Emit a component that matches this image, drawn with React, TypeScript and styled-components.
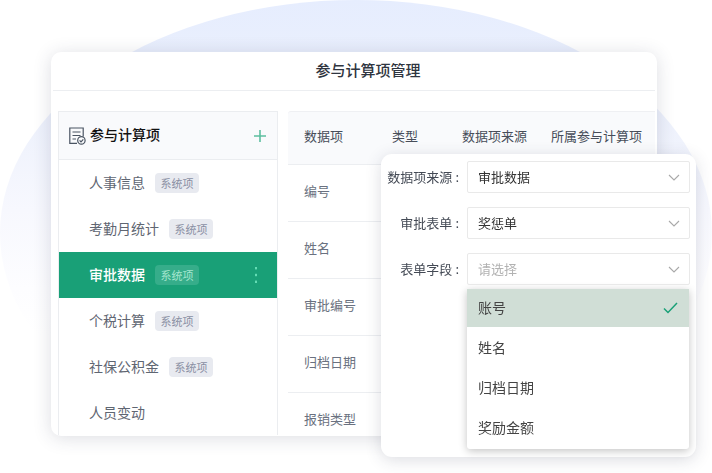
import React from "react";
import styled, { createGlobalStyle } from "styled-components";

const Global = createGlobalStyle`
  html, body { margin: 0; padding: 0; background: #fff; }
  body { font-family: "Noto Sans CJK SC", "Noto Sans", sans-serif; }
  * { box-sizing: border-box; }
`;

const Stage = styled.div`
  position: relative;
  width: 712px;
  height: 473px;
  overflow: hidden;
  padding: 52px 55px 37px 51px;
  background: #fff;
`;

const Backdrop = styled.div`
  position: absolute;
  left: 0;
  top: 0;
  width: 712px;
  height: 466px;
  border-radius: 50%;
  background: linear-gradient(180deg, #e6edfe 0%, #edf1fc 25%, #f7f8fe 45%, #fdfdff 62%, #ffffff 72%);
`;

const Panel = styled.section`
  position: relative;
  height: 384px;
  border-radius: 10px;
  background: #fff;
  overflow: hidden;
  box-shadow: 0 2px 18px rgba(45, 55, 85, 0.17);
`;

const PanelTitle = styled.header`
  height: 39px;
  margin: 0 2px;
  padding: 0 0 3px 28px;
  display: flex;
  align-items: center;
  justify-content: center;
  border-bottom: 1px solid #eceef1;
  font-size: 15px;
  font-weight: 500;
  color: #2f3540;
`;

const PanelBody = styled.div`
  display: flex;
  gap: 10px;
  padding: 20px 2px 0 7px;
`;

const List = styled.div`
  width: 220px;
  flex: none;
  height: 324px;
  border: 1px solid #ebedf0;
  border-bottom: 0;
`;

const ListHead = styled.div`
  height: 48px;
  display: flex;
  align-items: center;
  gap: 4px;
  padding: 0 10px;
  background: #f9fafc;
  border-bottom: 1px solid #ebedf0;
  font-size: 14px;
  font-weight: 500;
  color: #111;
`;

const ListHeadText = styled.span`
  flex: 1;
  padding-bottom: 3px;
`;

const ListRow = styled.div<{ $active?: boolean }>`
  height: 46px;
  display: flex;
  align-items: center;
  padding: 0 19px 0 30px;
  font-size: 14px;
  font-weight: ${(p) => (p.$active ? 500 : 400)};
  color: ${(p) => (p.$active ? "#fff" : "#5f6672")};
  background: ${(p) => (p.$active ? "#19a077" : "transparent")};
`;

const RowName = styled.span`
  padding-bottom: 2px;
`;

const Tag = styled.span<{ $active?: boolean }>`
  margin-left: 10px;
  width: 44px;
  height: 20px;
  display: flex;
  align-items: center;
  justify-content: center;
  border-radius: 4px;
  font-size: 11px;
  font-weight: 400;
  color: ${(p) => (p.$active ? "#a5e6cf" : "#8a8fa3")};
  background: ${(p) => (p.$active ? "#36ad8a" : "#e8eaf0")};
`;

const MoreIcon = styled.svg`
  margin-left: auto;
  flex: none;
`;

const Table = styled.div`
  flex: 1;
  font-size: 13px;
`;

const TableHead = styled.div`
  display: grid;
  grid-template-columns: 88px 70px 89px 1fr;
  height: 54px;
  align-items: center;
  background: #f9fafc;
  border-top: 1px solid #eff0f3;
  border-bottom: 1px solid #eceef1;
  border-top-left-radius: 3px;
  padding: 0 0 5px 16px;
  color: #474d59;
  white-space: nowrap;
`;

const TableRow = styled.div`
  height: 57px;
  padding: 0 0 5px 16px;
  display: flex;
  align-items: center;
  border-bottom: 1px solid #eceef1;
  color: #6a7180;
`;

const Floating = styled.div`
  position: absolute;
  left: 381px;
  top: 154px;
  width: 315px;
  height: 303px;
  padding: 7px 6px 0 0;
  border-radius: 11px;
  background: #fff;
  box-shadow: 0 3px 16px rgba(45, 55, 85, 0.17);
  will-change: transform;
`;

const Field = styled.div<{ $tight?: boolean }>`
  display: flex;
  align-items: center;
  gap: 8px;
  margin-bottom: ${(p) => (p.$tight ? "4px" : "14px")};
`;

const Label = styled.label`
  width: 78px;
  flex: none;
  padding-bottom: 1px;
  text-align: right;
  font-size: 13px;
  color: #444a55;
  white-space: nowrap;
`;

const Colon = styled.span`
  margin-left: 3px;
`;

const Select = styled.div<{ $placeholder?: boolean }>`
  flex: 1;
  height: 32px;
  display: flex;
  align-items: center;
  justify-content: space-between;
  padding: 0 9px 0 10px;
  border: 1px solid #e9e9e9;
  border-radius: 2px;
  font-size: 13px;
  color: ${(p) => (p.$placeholder ? "#b2b2b2" : "#333")};
`;

const SelectText = styled.span`
  padding-bottom: 1px;
`;

const Dropdown = styled.div`
  margin-left: 86px;
  width: 222px;
  height: 160px;
  padding-bottom: 1px;
  border-radius: 0 0 3px 3px;
  background: #fff;
  box-shadow: 0 2px 8px rgba(0, 0, 0, 0.24);
`;

const Option = styled.div<{ $selected?: boolean }>`
  height: ${(p) => (p.$selected ? "38px" : "40px")};
  margin-bottom: ${(p) => (p.$selected ? "1px" : "0")};
  display: flex;
  align-items: center;
  justify-content: space-between;
  padding: 0 11px 0 11px;
  font-size: 14px;
  color: #444;
  background: ${(p) => (p.$selected ? "#d0ded6" : "transparent")};
`;

const OptionText = styled.span`
  padding-bottom: 2px;
`;

const Chevron = () => (
  <svg width="12" height="7" viewBox="0 0 12 7" fill="none">
    <path d="M1 1l5 5 5-5" stroke="#a9a9a9" strokeWidth="1.1" />
  </svg>
);

const FormIcon = () => (
  <svg width="17" height="18" viewBox="0 0 17 18" fill="none" stroke="#4a5462" strokeWidth="1.2">
    <path d="M8 16.4H.8V1h13.4v8.6" />
    <path d="M3.5 5h8M3.5 8.5h8M3.5 12h3.5" />
    <circle cx="12.4" cy="13.4" r="3.7" />
    <path d="M10.6 13.3l1.4 1.5 2.3-2.4" />
  </svg>
);

const rows = [
  { name: "人事信息", tag: true },
  { name: "考勤月统计", tag: true },
  { name: "审批数据", tag: true, active: true },
  { name: "个税计算", tag: true },
  { name: "社保公积金", tag: true },
  { name: "人员变动", tag: false },
];

const fields = [
  { label: "数据项来源", value: "审批数据" },
  { label: "审批表单", value: "奖惩单" },
  { label: "表单字段", value: "请选择", placeholder: true },
];

export default function App() {
  return (
    <Stage>
      <Global />
      <Backdrop />
      <Panel>
        <PanelTitle>参与计算项管理</PanelTitle>
        <PanelBody>
          <List>
            <ListHead>
              <FormIcon />
              <ListHeadText>参与计算项</ListHeadText>
              <svg width="14" height="14" viewBox="0 0 14 14" fill="none">
                <path d="M7 1v12M1 7h12" stroke="#5cbf9f" strokeWidth="1.6" />
              </svg>
            </ListHead>
            {rows.map((r) => (
              <ListRow key={r.name} $active={r.active}>
                <RowName>{r.name}</RowName>
                {r.tag && <Tag $active={r.active}>系统项</Tag>}
                {r.active && (
                  <MoreIcon width="4" height="18" viewBox="0 0 4 18" fill="#63dcb4">
                    <rect x="1" y="1" width="2" height="2.4" />
                    <rect x="1" y="7.8" width="2" height="2.4" />
                    <rect x="1" y="14.6" width="2" height="2.4" />
                  </MoreIcon>
                )}
              </ListRow>
            ))}
          </List>
          <Table>
            <TableHead>
              <span>数据项</span>
              <span>类型</span>
              <span>数据项来源</span>
              <span>所属参与计算项</span>
            </TableHead>
            {["编号", "姓名", "审批编号", "归档日期", "报销类型"].map((t) => (
              <TableRow key={t}>{t}</TableRow>
            ))}
          </Table>
        </PanelBody>
      </Panel>
      <Floating>
        {fields.map((f) => (
          <Field key={f.label} $tight={f.placeholder}>
            <Label>
              {f.label}
              <Colon>:</Colon>
            </Label>
            <Select $placeholder={f.placeholder}>
              <SelectText>{f.value}</SelectText>
              <Chevron />
            </Select>
          </Field>
        ))}
        <Dropdown>
          <Option $selected>
            <OptionText>账号</OptionText>
            <svg width="15" height="12" viewBox="0 0 15 12" fill="none">
              <path d="M1 6.5l4 4L14 1" stroke="#19a077" strokeWidth="1.5" />
            </svg>
          </Option>
          <Option>
            <OptionText>姓名</OptionText>
          </Option>
          <Option>
            <OptionText>归档日期</OptionText>
          </Option>
          <Option>
            <OptionText>奖励金额</OptionText>
          </Option>
        </Dropdown>
      </Floating>
    </Stage>
  );
}
